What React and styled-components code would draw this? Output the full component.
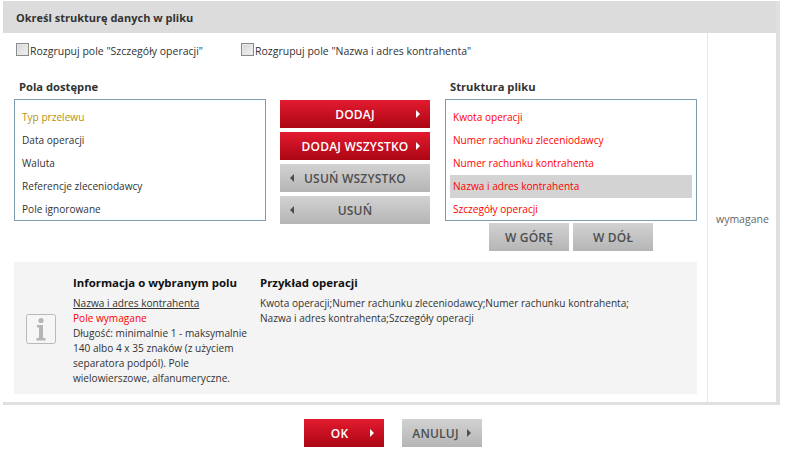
import styled, { createGlobalStyle } from "styled-components";

const GlobalStyle = createGlobalStyle`
  html, body {
    margin: 0;
    padding: 0;
    background: #fff;
  }
  body {
    font-family: "Open Sans", "Noto Sans", sans-serif;
    font-size: 10.5px;
    color: #333;
  }
`;

const Page = styled.div`
  width: 787px;
  height: 454px;
  overflow: hidden;
  padding: 1px 0 0 3px;
  box-sizing: border-box;
`;

const Panel = styled.div`
  width: 777px;
  box-sizing: border-box;
  border-right: 4px solid #e0e0e0;
  border-bottom: 3px solid #e0e0e0;
`;

const Header = styled.div`
  height: 32px;
  background: #dcdcdc;
  padding-left: 13px;
  display: flex;
  align-items: center;
  font-size: 11px;
  font-weight: 700;
  color: #333;
`;

const Body = styled.div`
  display: flex;
  height: 369px;
`;

const Main = styled.div`
  width: 704px;
  box-sizing: border-box;
  padding: 10px 10px 0 11px;
`;

const Side = styled.div`
  flex: 1;
  border-left: 1px solid #e6e6e6;
  padding: 179px 0 0 8px;
  color: #666;
`;

const Options = styled.div`
  display: flex;
  height: 16px;
  padding-left: 2px;
`;

const Option = styled.label`
  display: flex;
  align-items: center;
  width: 225px;
  white-space: nowrap;
`;

const CheckBox = styled.span`
  flex-shrink: 0;
  align-self: flex-start;
  width: 13px;
  height: 13px;
  margin-right: 1px;
  box-sizing: border-box;
  border: 1px solid #8a8a8a;
  background: linear-gradient(135deg, #d4d4d4, #f4f4f4);
  box-shadow: inset 0 0 0 1px #e8e8e8;
`;

const Columns = styled.div`
  display: flex;
  margin-top: 19px;
`;

const Column = styled.div`
  width: 252px;
`;

const ColumnTitle = styled.div`
  height: 20px;
  padding: 1px 0 0 ${(p) => p.$indent}px;
  font-size: 11.2px;
  font-weight: 700;
  color: #333;
`;

const List = styled.ul`
  list-style: none;
  margin: 0;
  padding: 6px 4px 0;
  width: 252px;
  height: 122px;
  box-sizing: border-box;
  border: 1px solid #7f9db0;
  font-size: 10.1px;
`;

const ListItem = styled.li`
  height: 23px;
  line-height: 22px;
  padding-left: 3px;
  white-space: nowrap;
  color: ${(p) => p.$color || "#333"};
  background: ${(p) => (p.$selected ? "#d3d3d3" : "transparent")};
`;

const ButtonColumn = styled.div`
  width: 150px;
  margin: 22px 15px 0 14px;
  display: flex;
  flex-direction: column;
  gap: 4px;
`;

const Button = styled.button`
  display: grid;
  grid-template-columns: ${(p) => p.$slots || "14px 1fr 14px"};
  align-items: center;
  width: ${(p) => p.$width}px;
  height: 28px;
  padding: 0 0 0 ${(p) => p.$pad || 0}px;
  border: 0;
  font-family: "Open Sans", "Noto Sans", sans-serif;
  font-size: 12px;
  font-weight: 600;
  letter-spacing: 0.2px;
  white-space: nowrap;
  text-align: center;
  color: ${(p) => (p.$primary ? "#fff" : "#4e4e4e")};
  background: ${(p) =>
    p.$primary
      ? "linear-gradient(#e31b30, #ab0613)"
      : "linear-gradient(#d2d2d2, #b5b5b5)"};
`;

const ArrowRight = styled.span`
  justify-self: start;
  width: 0;
  height: 0;
  border-top: 4px solid transparent;
  border-bottom: 4px solid transparent;
  border-left: 4px solid ${(p) => (p.$primary ? "#fff" : "#4e4e4e")};
`;

const ArrowLeft = styled.span`
  justify-self: end;
  width: 0;
  height: 0;
  border-top: 4px solid transparent;
  border-bottom: 4px solid transparent;
  border-right: 4px solid #4e4e4e;
`;

const MoveRow = styled.div`
  display: flex;
  justify-content: center;
  gap: 4px;
  margin-top: 2px;
`;

const InfoBox = styled.div`
  display: flex;
  height: 132px;
  margin-top: 11px;
  background: #f4f4f4;
  box-sizing: border-box;
  font-size: 10.1px;
`;

const IconCell = styled.div`
  width: 59px;
  padding: 52px 0 0 12px;
  box-sizing: border-box;
`;

const FieldInfo = styled.div`
  width: 187px;
  padding-top: 13px;
  line-height: 15px;
`;

const ExampleInfo = styled.div`
  flex: 1;
  padding-top: 13px;
  line-height: 15px;
`;

const InfoTitle = styled.div`
  font-size: 11.4px;
  font-weight: 700;
  color: #111;
  margin-bottom: 6px;
`;

const FieldName = styled.div`
  text-decoration: underline;
`;

const Required = styled.div`
  color: #f00;
`;

const Footer = styled.div`
  display: flex;
  justify-content: center;
  gap: 18px;
  margin-top: 14px;
  padding-right: 5px;
`;

function InfoIcon() {
  return (
    <svg width="30" height="30" viewBox="0 0 30 30">
      <rect x="0.5" y="0.5" width="29" height="29" rx="2" fill="#f6f6f6" stroke="#b9b9b9" />
      <circle cx="15" cy="6.5" r="2.6" fill="#b5b5b5" />
      <path d="M11 11h6v13h2.5v2.5h-9V24H13V13.5h-2z" fill="#b5b5b5" />
    </svg>
  );
}

const available = ["Typ przelewu", "Data operacji", "Waluta", "Referencje zleceniodawcy", "Pole ignorowane"];
const structure = [
  "Kwota operacji",
  "Numer rachunku zleceniodawcy",
  "Numer rachunku kontrahenta",
  "Nazwa i adres kontrahenta",
  "Szczegóły operacji",
];

export default function App() {
  return (
    <Page>
      <GlobalStyle />
      <Panel>
        <Header>Określ strukturę danych w pliku</Header>
        <Body>
          <Main>
            <Options>
              <Option>
                <CheckBox />
                Rozgrupuj pole "Szczegóły operacji"
              </Option>
              <Option>
                <CheckBox />
                Rozgrupuj pole "Nazwa i adres kontrahenta"
              </Option>
            </Options>
            <Columns>
              <Column>
                <ColumnTitle $indent={5}>Pola dostępne</ColumnTitle>
                <List>
                  {available.map((name, i) => (
                    <ListItem key={name} $color={i === 0 ? "#b8900f" : undefined}>
                      {name}
                    </ListItem>
                  ))}
                </List>
              </Column>
              <ButtonColumn>
                <Button $primary $width={150}>
                  <span />
                  DODAJ
                  <ArrowRight $primary />
                </Button>
                <Button $primary $width={150}>
                  <span />
                  DODAJ WSZYSTKO
                  <ArrowRight $primary />
                </Button>
                <Button $width={150}>
                  <ArrowLeft />
                  USUŃ WSZYSTKO
                  <span />
                </Button>
                <Button $width={150}>
                  <ArrowLeft />
                  USUŃ
                  <span />
                </Button>
              </ButtonColumn>
              <Column>
                <ColumnTitle $indent={5}>Struktura pliku</ColumnTitle>
                <List>
                  {structure.map((name, i) => (
                    <ListItem key={name} $color="#f00" $selected={i === 3}>
                      {name}
                    </ListItem>
                  ))}
                </List>
                <MoveRow>
                  <Button $width={80} $slots="1fr">
                    W GÓRĘ
                  </Button>
                  <Button $width={80} $slots="1fr">
                    W DÓŁ
                  </Button>
                </MoveRow>
              </Column>
            </Columns>
            <InfoBox>
              <IconCell>
                <InfoIcon />
              </IconCell>
              <FieldInfo>
                <InfoTitle>Informacja o wybranym polu</InfoTitle>
                <FieldName>Nazwa i adres kontrahenta</FieldName>
                <Required>Pole wymagane</Required>
                Długość: minimalnie 1 - maksymalnie 140 albo 4 x 35 znaków (z użyciem separatora podpól). Pole
                wielowierszowe, alfanumeryczne.
              </FieldInfo>
              <ExampleInfo>
                <InfoTitle>Przykład operacji</InfoTitle>
                Kwota operacji;Numer rachunku zleceniodawcy;Numer rachunku kontrahenta;
                <br />
                Nazwa i adres kontrahenta;Szczegóły operacji
              </ExampleInfo>
            </InfoBox>
          </Main>
          <Side>wymagane</Side>
        </Body>
      </Panel>
      <Footer>
        <Button $primary $width={80} $pad={6} $slots="60px 5px">
          OK
          <ArrowRight $primary />
        </Button>
        <Button $width={80} $pad={3} $slots="62px 5px">
          ANULUJ
          <ArrowRight />
        </Button>
      </Footer>
    </Page>
  );
}
